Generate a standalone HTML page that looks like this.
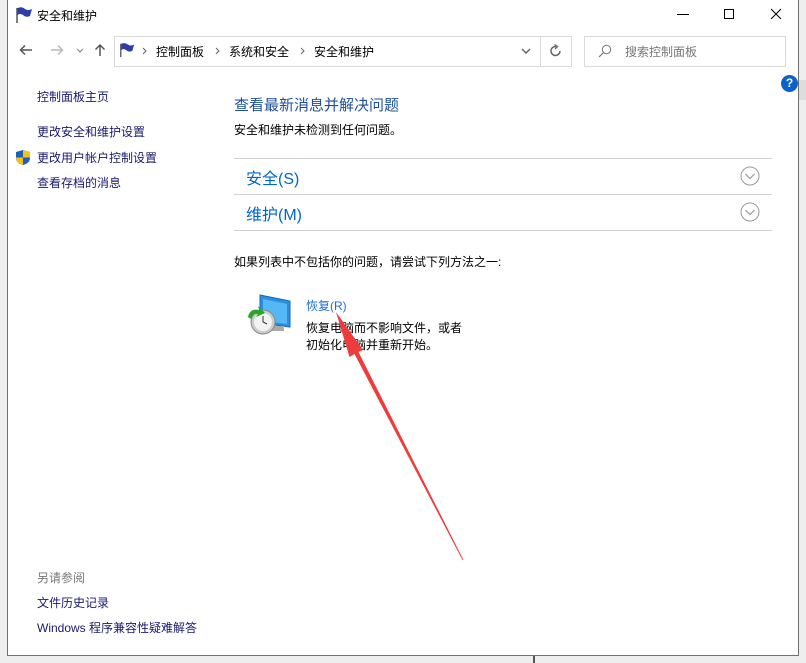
<!DOCTYPE html>
<html><head><meta charset="utf-8"><style>
*{margin:0;padding:0;box-sizing:border-box}
body{width:806px;height:663px;background:#eeeeee;position:relative;overflow:hidden;font-family:"Liberation Sans","Microsoft YaHei","Noto Sans CJK SC",sans-serif;font-size:12px;color:#000}
.win{position:absolute;left:7px;top:0;width:792px;height:656px;background:#fff;border:1px solid #707070;border-top:none}
.a{position:absolute;white-space:nowrap}
.lnk{color:#1a1a6e}
.blue{color:#0066cc}
</style></head><body>
<div class="win"></div>
<div class="a" style="left:799px;top:80px;width:7px;height:20px;background:#ddd"></div>
<div class="a" style="left:533px;top:656px;width:2px;height:7px;background:#555"></div>
<!-- title bar -->
<svg class="a" style="left:14px;top:6px" width="20" height="18" viewBox="0 0 20 18"><path d="M3 2 L3 17" stroke="#555" stroke-width="1.5"/><path d="M3.5 2 Q8 0 11 3 Q14 5 18 3 L16 10 Q12 12 9 9 Q6 7 3.5 9Z" fill="#2b3fa8"/></svg>
<div class="a" style="left:37px;top:7px;font-size:12px">安全和维护</div>
<div class="a" style="left:677px;top:14px;width:12px;height:1px;background:#000"></div>
<div class="a" style="left:724px;top:9px;width:10px;height:10px;border:1px solid #000"></div>
<svg class="a" style="left:770px;top:8px" width="12" height="12"><path d="M1 1L11 11M11 1L1 11" stroke="#000" stroke-width="1"/></svg>
<!-- nav -->
<svg class="a" style="left:19px;top:44px" width="14" height="12"><path d="M13 6H2M6 1.5L1.5 6L6 10.5" stroke="#555" stroke-width="1.5" fill="none"/></svg>
<svg class="a" style="left:50px;top:44px" width="14" height="12"><path d="M1 6H12M8 1.5L12.5 6L8 10.5" stroke="#bbb" stroke-width="1.5" fill="none"/></svg>
<svg class="a" style="left:76px;top:48px" width="8" height="5"><path d="M1 1L4 4L7 1" stroke="#888" stroke-width="1.2" fill="none"/></svg>
<svg class="a" style="left:94px;top:43px" width="12" height="14"><path d="M6 13V2M1.5 6.5L6 2L10.5 6.5" stroke="#555" stroke-width="1.5" fill="none"/></svg>
<div class="a" style="left:114px;top:36px;width:458px;height:31px;border:1px solid #d9d9d9"></div>
<div class="a" style="left:540px;top:37px;width:1px;height:29px;background:#d9d9d9"></div>
<svg class="a" style="left:118px;top:42px" width="18" height="16" viewBox="0 0 20 18"><path d="M3 2 L3 17" stroke="#555" stroke-width="1.5"/><path d="M3.5 2 Q8 0 11 3 Q14 5 18 3 L16 10 Q12 12 9 9 Q6 7 3.5 9Z" fill="#2b3fa8"/></svg>
<svg class="a" style="left:142px;top:47px" width="5" height="8"><path d="M1 1L4 4L1 7" stroke="#666" fill="none"/></svg>
<div class="a" style="left:156px;top:43px">控制面板</div>
<svg class="a" style="left:215px;top:47px" width="5" height="8"><path d="M1 1L4 4L1 7" stroke="#666" fill="none"/></svg>
<div class="a" style="left:229px;top:43px">系统和安全</div>
<svg class="a" style="left:300px;top:47px" width="5" height="8"><path d="M1 1L4 4L1 7" stroke="#666" fill="none"/></svg>
<div class="a" style="left:314px;top:43px">安全和维护</div>
<svg class="a" style="left:521px;top:48px" width="10" height="6"><path d="M1 1L5 5L9 1" stroke="#666" stroke-width="1.5" fill="none"/></svg>
<svg class="a" style="left:549px;top:44px" width="14" height="14"><path d="M11 7A4.5 4.5 0 1 1 7 2.5" stroke="#666" stroke-width="1.5" fill="none"/><path d="M5.5 0.5L8.5 2.5L6 5" stroke="#666" stroke-width="1.3" fill="none"/></svg>
<div class="a" style="left:584px;top:36px;width:202px;height:31px;border:1px solid #d9d9d9"></div>
<svg class="a" style="left:598px;top:44px" width="14" height="14"><circle cx="8.5" cy="5.5" r="4.2" stroke="#777" fill="none"/><path d="M5.5 8.5L1 13" stroke="#777" stroke-width="1.2"/></svg>
<div class="a" style="left:625px;top:43px;color:#777">搜索控制面板</div>
<div class="a" style="left:781px;top:75px;width:17px;height:17px;border-radius:50%;background:#0a63c9;color:#fff;font-weight:bold;font-size:12px;text-align:center;line-height:17px">?</div>
<!-- left -->
<div class="a lnk" style="left:37px;top:88px">控制面板主页</div>
<div class="a lnk" style="left:37px;top:123px">更改安全和维护设置</div>
<svg class="a" style="left:15px;top:149px" width="16" height="17" viewBox="0 0 16 17"><path d="M8 1L15 3V9Q15 14 8 16Q1 14 1 9V3Z" fill="#1f5fb8"/><path d="M8 1L15 3V8.5H8ZM8 8.5V16Q1 14 1 8.5Z" fill="#f2c21b"/></svg>
<div class="a lnk" style="left:37px;top:149px">更改用户帐户控制设置</div>
<div class="a lnk" style="left:37px;top:174px">查看存档的消息</div>
<div class="a" style="left:37px;top:569px;color:#777">另请参阅</div>
<div class="a lnk" style="left:37px;top:594px">文件历史记录</div>
<div class="a lnk" style="left:37px;top:619px">Windows 程序兼容性疑难解答</div>
<!-- main -->
<div class="a" style="left:234px;top:94px;font-size:15px;color:#1e4e9e">查看最新消息并解决问题</div>
<div class="a" style="left:234px;top:121px">安全和维护未检测到任何问题。</div>
<div class="a" style="left:234px;top:158px;width:538px;height:1px;background:#d0d0d0"></div>
<div class="a" style="left:234px;top:194px;width:538px;height:1px;background:#d0d0d0"></div>
<div class="a" style="left:234px;top:230px;width:538px;height:1px;background:#d0d0d0"></div>
<div class="a blue" style="left:246px;top:165px;font-size:16px">安全(S)</div>
<div class="a blue" style="left:246px;top:201px;font-size:16px">维护(M)</div>
<svg class="a" style="left:740px;top:166px" width="20" height="20"><circle cx="10" cy="10" r="9" stroke="#999" fill="none"/><path d="M5.5 8L10 12.5L14.5 8" stroke="#999" fill="none" stroke-width="1.2"/></svg>
<svg class="a" style="left:740px;top:202px" width="20" height="20"><circle cx="10" cy="10" r="9" stroke="#999" fill="none"/><path d="M5.5 8L10 12.5L14.5 8" stroke="#999" fill="none" stroke-width="1.2"/></svg>
<div class="a" style="left:234px;top:253px">如果列表中不包括你的问题，请尝试下列方法之一:</div>
<svg class="a" style="left:246px;top:293px" width="48" height="44"><path d="M14 2L44 8V34L14 30Z" fill="#2a8fe0" stroke="#1767b8"/><path d="M17 6L41 11V31L17 28Z" fill="#53b8f5"/><rect x="26" y="33" width="12" height="5" fill="#aaa"/><circle cx="17" cy="29" r="12" fill="#ccc" stroke="#888"/><circle cx="17" cy="29" r="9" fill="#f3f3f3"/><path d="M17 23V29L21 31" stroke="#333" fill="none"/><path d="M2 24Q4 15 13 17L12 13L19 20L10 24L12 21Q7 20 5 26Z" fill="#2aa52a"/></svg>
<div class="a" style="left:306px;top:297px;color:#1f6fd6">恢复(R)</div>
<div class="a" style="left:306px;top:319px">恢复电脑而不影响文件，或者</div>
<div class="a" style="left:306px;top:336px">初始化电脑并重新开始。</div>
<svg class="a" style="left:0;top:0" width="806" height="663"><polygon points="336,312 363,350 358.5,352 463.5,560 462.5,560 354.5,354 349.5,357" fill="#ee3b3b"/></svg>
</body></html>
